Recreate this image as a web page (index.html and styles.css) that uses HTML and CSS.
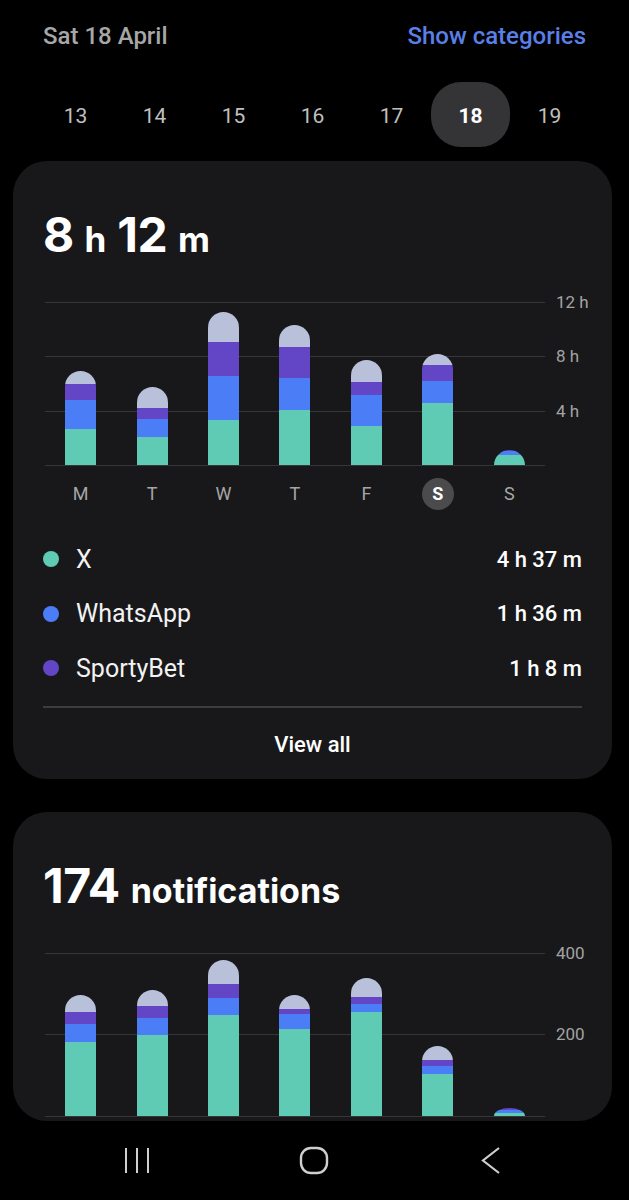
FILE: index.html
```html
<!DOCTYPE html>
<html lang="en">
<head>
  <meta charset="UTF-8">
  <meta name="viewport" content="width=device-width, initial-scale=1.0">
  <title>Screen time</title>
  <link rel="stylesheet" href="styles.css">
</head>
<body>
  <div class="top-bar">
    <span class="day-title">Sat 18 April</span>
    <span class="show-cat">Show categories</span>
  </div>

  <div class="dates">
    <span>13</span>
    <span>14</span>
    <span>15</span>
    <span>16</span>
    <span>17</span>
    <span class="selected">18</span>
    <span>19</span>
  </div>

  <!-- screen time card -->
  <div class="card">
    <h2 class="total">8 <small>h</small> 12 <small>m</small></h2>

    <div class="chart">
      <div class="plot">
        <div class="grid-lines"><div></div><div></div><div></div></div>
        <div class="bars">
          <div class="col"><div class="bar" style="height:94px"><i class="other"></i><i class="sporty" style="height:16px"></i><i class="whatsapp" style="height:29px"></i><i class="x" style="height:36px"></i></div></div>
          <div class="col"><div class="bar" style="height:78px"><i class="other"></i><i class="sporty" style="height:11px"></i><i class="whatsapp" style="height:18px"></i><i class="x" style="height:28px"></i></div></div>
          <div class="col"><div class="bar" style="height:153px"><i class="other"></i><i class="sporty" style="height:34px"></i><i class="whatsapp" style="height:44px"></i><i class="x" style="height:45px"></i></div></div>
          <div class="col"><div class="bar" style="height:140px"><i class="other"></i><i class="sporty" style="height:31px"></i><i class="whatsapp" style="height:32px"></i><i class="x" style="height:55px"></i></div></div>
          <div class="col"><div class="bar" style="height:105px"><i class="other"></i><i class="sporty" style="height:13px"></i><i class="whatsapp" style="height:31px"></i><i class="x" style="height:39px"></i></div></div>
          <div class="col"><div class="bar" style="height:111px"><i class="other"></i><i class="sporty" style="height:16px"></i><i class="whatsapp" style="height:22px"></i><i class="x" style="height:62px"></i></div></div>
          <div class="col"><div class="bar" style="height:15px"><i class="other"></i><i class="sporty" style="height:1px"></i><i class="whatsapp" style="height:4px"></i><i class="x" style="height:10px"></i></div></div>
        </div>
      </div>
      <div class="axis">
        <span>12 h</span>
        <span>8 h</span>
        <span>4 h</span>
      </div>
    </div>

    <div class="days">
      <span>M</span>
      <span>T</span>
      <span>W</span>
      <span>T</span>
      <span>F</span>
      <span class="today">S</span>
      <span>S</span>
    </div>

    <ul class="legend">
      <li><i class="dot x"></i><span class="app">X</span><span class="time">4 h 37 m</span></li>
      <li><i class="dot whatsapp"></i><span class="app">WhatsApp</span><span class="time">1 h 36 m</span></li>
      <li><i class="dot sporty"></i><span class="app">SportyBet</span><span class="time">1 h 8 m</span></li>
    </ul>

    <div class="view-all">View all</div>
  </div>

  <!-- notifications card -->
  <div class="card notif">
    <h2 class="total">174 <small>notifications</small></h2>

    <div class="chart">
      <div class="plot">
        <div class="grid-lines"><div></div><div></div></div>
        <div class="bars">
          <div class="col"><div class="bar" style="height:121px"><i class="other"></i><i class="sporty" style="height:12px"></i><i class="whatsapp" style="height:18px"></i><i class="x" style="height:74px"></i></div></div>
          <div class="col"><div class="bar" style="height:126px"><i class="other"></i><i class="sporty" style="height:12px"></i><i class="whatsapp" style="height:17px"></i><i class="x" style="height:81px"></i></div></div>
          <div class="col"><div class="bar" style="height:156px"><i class="other"></i><i class="sporty" style="height:14px"></i><i class="whatsapp" style="height:17px"></i><i class="x" style="height:101px"></i></div></div>
          <div class="col"><div class="bar" style="height:121px"><i class="other"></i><i class="sporty" style="height:5px"></i><i class="whatsapp" style="height:15px"></i><i class="x" style="height:87px"></i></div></div>
          <div class="col"><div class="bar" style="height:138px"><i class="other"></i><i class="sporty" style="height:7px"></i><i class="whatsapp" style="height:8px"></i><i class="x" style="height:104px"></i></div></div>
          <div class="col"><div class="bar" style="height:70px"><i class="other"></i><i class="sporty" style="height:6px"></i><i class="whatsapp" style="height:8px"></i><i class="x" style="height:42px"></i></div></div>
          <div class="col"><div class="bar" style="height:8px"><i class="other"></i><i class="sporty" style="height:2px"></i><i class="whatsapp" style="height:3px"></i><i class="x" style="height:3px"></i></div></div>
        </div>
      </div>
      <div class="axis">
        <span>400</span>
        <span>200</span>
      </div>
    </div>
  </div>

  <!-- system navigation -->
  <div class="nav-bar">
    <svg width="26" height="27" viewBox="0 0 26 27">
      <path d="M2 1v25M13 1v25M24 1v25" stroke="#cfcfcf" stroke-width="2" fill="none"/>
    </svg>
    <svg width="30" height="29" viewBox="0 0 30 29">
      <rect x="2" y="2" width="26" height="25" rx="10" stroke="#cfcfcf" stroke-width="2.4" fill="none"/>
    </svg>
    <svg width="20" height="29" viewBox="0 0 20 29">
      <path d="M18 2L2 14.5L18 27" stroke="#cfcfcf" stroke-width="2.2" fill="none"/>
    </svg>
  </div>
</body>
</html>
```

FILE: styles.css
```css
body {
  margin: 0;
  background: #000;
  color: #fff;
  font-family: Roboto, "Liberation Sans", sans-serif;
  width: 629px;
  height: 1200px;
  overflow: hidden;
}

.top-bar {
  display: flex;
  justify-content: space-between;
  padding: 22px 43px 0 43px;
  line-height: 28px;
  font-size: 24px;
  font-weight: 500;
}

.day-title {
  color: #a7a7a7;
}

.show-cat {
  color: #5a7fe8;
}

.dates {
  display: grid;
  grid-template-columns: repeat(7, 79px);
  margin-top: 32px;
  padding-left: 36px;
}

.dates span {
  height: 65px;
  line-height: 69px;
  text-align: center;
  font-size: 21px;
  color: #c0c0c0;
}

.dates .selected {
  background: #343436;
  border-radius: 30px;
  color: #fff;
  font-weight: 700;
}

.card {
  margin: 14px 17px 0 13px;
  padding: 46px 30px 0 30px;
  background: #18181a;
  border-radius: 34px;
}

.total {
  margin: 0;
  height: 56px;
  font-family: Inter, Roboto, sans-serif;
  font-size: 48px;
  line-height: 56px;
  font-weight: 700;
  letter-spacing: -0.5px;
}

.total small {
  font-size: 35px;
  letter-spacing: 0;
}

.notif .total small {
  font-size: 34px;
}

/* chart */
.chart {
  display: grid;
  grid-template-columns: 500px 1fr;
  column-gap: 11px;
  margin: 39px 0 0 2px;
}

.plot {
  display: grid;
  height: 164px;
}

.grid-lines,
.bars {
  grid-area: 1 / 1;
}

.grid-lines {
  display: flex;
  flex-direction: column;
  border-bottom: 1px solid #363638;
}

.grid-lines div {
  flex: 1;
  border-top: 1px solid #363638;
}

.bars {
  display: grid;
  grid-template-columns: repeat(7, 1fr);
  align-items: end;
  padding-bottom: 1px;
}

.col {
  display: flex;
  justify-content: center;
}

.bar {
  width: 31px;
  display: flex;
  flex-direction: column;
  overflow: hidden;
  border-radius: 50% 50% 0 0 / min(15.5px, 100%) min(15.5px, 100%) 0 0;
}

.bar i {
  display: block;
  flex-shrink: 0;
}

.bar .other {
  flex: 1;
  background: #b8c1d9;
}

.x { background: #5fcbb5; }
.whatsapp { background: #4a7df6; }
.sporty { background: #6346c6; }

.axis {
  display: flex;
  flex-direction: column;
  font-size: 17px;
  color: #a3a3a3;
  white-space: nowrap;
}

.axis span {
  height: 54.4px;
  line-height: 20px;
  margin-top: -10px;
  margin-bottom: 10px;
}

.notif .axis span {
  height: 81.5px;
}

.days {
  display: grid;
  grid-template-columns: repeat(7, 1fr);
  width: 500px;
  margin: 12px 0 0 2px;
}

.days span {
  justify-self: center;
  width: 32px;
  height: 32px;
  line-height: 32px;
  text-align: center;
  font-size: 18px;
  color: #a6a6a6;
}

.days .today {
  background: #4b4b4d;
  border-radius: 50%;
  color: #fff;
  font-weight: 700;
}

/* legend */
.legend {
  list-style: none;
  margin: 22px 0 0 0;
  padding: 0;
}

.legend li {
  display: flex;
  align-items: center;
  height: 54.5px;
}

.dot {
  width: 16px;
  height: 16px;
  border-radius: 50%;
  margin-right: 17px;
}

.app {
  flex: 1;
  font-size: 25px;
  color: #f2f2f2;
}

.time {
  font-size: 22px;
  font-weight: 500;
}

.view-all {
  margin-top: 10px;
  border-top: 2px solid #3c3c3e;
  padding: 24px 0 21px 0;
  line-height: 26px;
  text-align: center;
  font-size: 22px;
  font-weight: 500;
}

.notif {
  margin-top: 33px;
  height: 263px;
  overflow: hidden;
}

.nav-bar {
  display: grid;
  grid-template-columns: repeat(3, 177px);
  justify-items: center;
  align-items: center;
  height: 80px;
  padding-left: 48px;
}
```
